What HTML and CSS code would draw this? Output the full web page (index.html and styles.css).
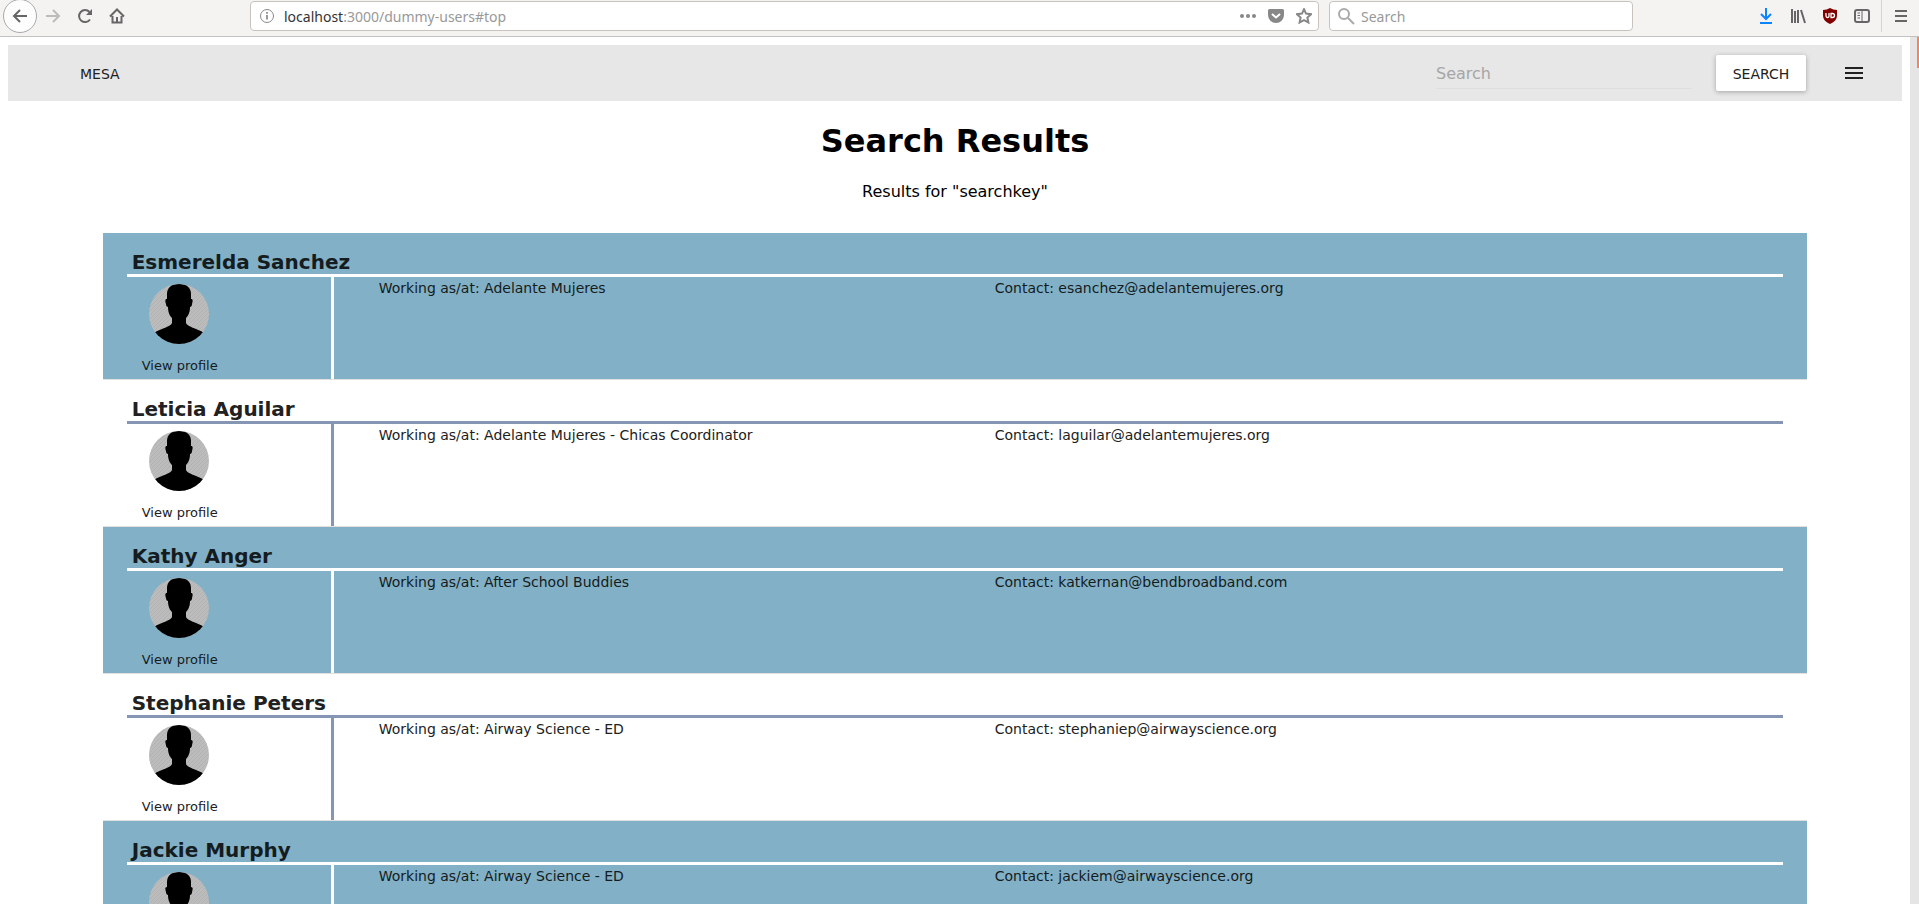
FILE: index.html
```
<!DOCTYPE html>
<html lang="en">
<head>
<meta charset="utf-8">
<title>MESA - Search Results</title>
<link rel="stylesheet" href="styles.css">
</head>
<body>
<svg class="defs" aria-hidden="true">
  <defs>
    <pattern id="stripes" width="4" height="4" patternUnits="userSpaceOnUse">
      <rect width="4" height="4" fill="#bcbcbc"/>
      <path d="M-1 1l2-2M0 4l4-4M3 5l2-2" stroke="#b2b2b2" stroke-width="1"/>
    </pattern>
    <clipPath id="round"><circle cx="30" cy="30" r="30"/></clipPath>
    <symbol id="avatar" viewBox="0 0 60 60">
      <g clip-path="url(#round)">
        <rect width="60" height="60" fill="url(#stripes)"/>
        <path d="M30 0C22 0 18 4 18 10V15C16 15 16 17 17 20C17 22 18 23 19 23C19 29 21 32 23 34V39C22 43 12 44 5 49V60H55V49C48 44 38 43 37 39V34C39 32 41 29 41 23C42 23 43 22 43 20C44 17 44 15 42 15V10C42 4 38 0 30 0Z" fill="#000"/>
      </g>
    </symbol>
  </defs>
</svg>
<header class="toolbar">
  <nav class="tools">
    <button class="tool back" aria-label="Back"><svg width="16" height="16" viewBox="0 0 16 16"><path d="M15 8H2M8 2L2 8l6 6"/></svg></button>
    <button class="tool forward" aria-label="Forward"><svg width="16" height="16" viewBox="0 0 16 16"><path d="M1 8h13M8 2l6 6-6 6"/></svg></button>
    <button class="tool" aria-label="Reload"><svg width="16" height="16" viewBox="0 0 16 16"><path d="M13 11.500A6 6 0 1 1 12.500 4"/><path d="M15 1v6H9z" fill="#666" stroke="none"/></svg></button>
    <button class="tool" aria-label="Home"><svg width="16" height="16" viewBox="0 0 16 16"><path d="M1 8.500L8 1.500l7 7M3.500 8v6.500h9V8"/><path d="M7 9h2v6H7z" fill="#666" stroke="none"/></svg></button>
  </nav>
  <div class="address">
    <svg width="16" height="16" viewBox="0 0 16 16"><circle cx="8" cy="8" r="6.500" fill="none" stroke="#888"/><path d="M8 7v4.500M8 4v1.700" stroke="#777" stroke-width="1.500"/></svg>
    <div class="url"><b>localhost</b>:3000/dummy-users#top</div>
    <button class="tool small" aria-label="Page actions"><svg width="16" height="16" viewBox="0 0 16 16"><g fill="#888" stroke="none"><circle cx="2" cy="8" r="2"/><circle cx="8" cy="8" r="2"/><circle cx="14" cy="8" r="2"/></g></svg></button>
    <button class="tool small" aria-label="Save to Pocket"><svg width="16" height="16" viewBox="0 0 16 16"><path d="M1.500 1h13A1.500 1.500 0 0 1 16 2.500V7A8 8 0 0 1 0 7V2.500A1.500 1.500 0 0 1 1.500 1z" fill="#888" stroke="none"/><path d="M4 6l4 3.500L12 6" stroke="#fff"/></svg></button>
    <button class="tool small" aria-label="Bookmark"><svg width="16" height="16" viewBox="0 0 16 16"><path d="M8 1.200l2 4.400 5 .6-3.600 3.300 1 5L8 12.200l-4.400 2.300 1-5L1 6.200l5-.6z" stroke="#888" stroke-width="2"/></svg></button>
  </div>
  <label class="websearch">
    <svg width="18" height="18" viewBox="0 0 18 18"><circle cx="7" cy="7" r="5" fill="none" stroke="#aaa" stroke-width="2"/><path d="M11 11l6 6" stroke="#aaa" stroke-width="2"/></svg>
    <input type="text" placeholder="Search" aria-label="Search the web">
  </label>
  <div class="extras">
    <button class="tool" aria-label="Downloads"><svg width="16" height="16" viewBox="0 0 16 16"><path d="M8 0v11M3 6l5 5 5-5M2 15h12" stroke="#0a84ff"/></svg></button>
    <button class="tool" aria-label="Library"><svg width="16" height="16" viewBox="0 0 16 16"><path d="M2 1v14M5 3v12M8 2v13M11 2l4 13"/></svg></button>
    <button class="tool" aria-label="Content blocker"><svg width="16" height="16" viewBox="0 0 16 16"><path d="M8 0q3 2 7 2v5c0 5-3 7-7 9-4-2-7-4-7-9V2q4 0 7-2z" fill="#800000" stroke="none"/><path d="M4 5v3q0 1.500 1.500 1.500T7 8V5M9 5.500h1.500a1.800 1.800 0 0 1 0 4H9z" stroke="#fff" stroke-width="1.300"/></svg></button>
    <button class="tool" aria-label="Sidebars"><svg width="16" height="16" viewBox="0 0 16 16"><rect x="1" y="2" width="14" height="12" rx="2"/><path d="M8 2v12M3.500 5H6M3.500 7.500H6M3.500 10H6" stroke-width="1"/></svg></button>
    <button class="tool menu" aria-label="Menu"><svg width="16" height="16" viewBox="0 0 16 16"><path d="M2 3h12M2 8h12M2 13h12"/></svg></button>
  </div>
</header>
<div class="viewport">
  <div class="page">
    <nav class="appbar">
      <a class="brand" href="#top">MESA</a>
      <form class="search">
        <input type="search" placeholder="Search" aria-label="Search">
        <button type="button">SEARCH</button>
      </form>
      <button class="burger" aria-label="Open menu"><svg width="18" height="12" viewBox="0 0 18 12"><path d="M0 1h18M0 6h18M0 11h18" stroke="#212121" stroke-width="2"/></svg></button>
    </nav>
    <main>
      <h1>Search Results</h1>
      <p class="summary">Results for "searchkey"</p>
      <ul class="results">
        <li class="card">
          <h2>Esmerelda Sanchez</h2>
          <div class="body">
            <div class="profile"><svg class="photo"><use href="#avatar"/></svg><a href="#top">View profile</a></div>
            <p>Working as/at: Adelante Mujeres</p>
            <p>Contact: esanchez@adelantemujeres.org</p>
          </div>
        </li>
        <li class="card">
          <h2>Leticia Aguilar</h2>
          <div class="body">
            <div class="profile"><svg class="photo"><use href="#avatar"/></svg><a href="#top">View profile</a></div>
            <p>Working as/at: Adelante Mujeres - Chicas Coordinator</p>
            <p>Contact: laguilar@adelantemujeres.org</p>
          </div>
        </li>
        <li class="card">
          <h2>Kathy Anger</h2>
          <div class="body">
            <div class="profile"><svg class="photo"><use href="#avatar"/></svg><a href="#top">View profile</a></div>
            <p>Working as/at: After School Buddies</p>
            <p>Contact: katkernan@bendbroadband.com</p>
          </div>
        </li>
        <li class="card">
          <h2>Stephanie Peters</h2>
          <div class="body">
            <div class="profile"><svg class="photo"><use href="#avatar"/></svg><a href="#top">View profile</a></div>
            <p>Working as/at: Airway Science - ED</p>
            <p>Contact: stephaniep@airwayscience.org</p>
          </div>
        </li>
        <li class="card">
          <h2>Jackie Murphy</h2>
          <div class="body">
            <div class="profile"><svg class="photo"><use href="#avatar"/></svg></div>
            <p>Working as/at: Airway Science - ED</p>
            <p>Contact: jackiem@airwayscience.org</p>
          </div>
        </li>
      </ul>
    </main>
  </div>
  <div class="track"><div class="thumb"></div></div>
</div>
</body>
</html>
```
FILE: styles.css
```
* { box-sizing: border-box; }

body {
  margin: 0;
  height: 100vh;
  overflow: hidden;
  display: flex;
  flex-direction: column;
  font-family: "DejaVu Sans", sans-serif;
  font-size: 14px;
  color: #000;
  background: #fff;
}

button, input { font: inherit; }
a { color: inherit; text-decoration: none; }
h1, h2, p, ul { margin: 0; padding: 0; }
.defs { position: absolute; width: 0; height: 0; }

/* Browser toolbar */
.toolbar {
  flex: none;
  display: flex;
  align-items: flex-start;
  height: 37px;
  background: #f4f3f1;
  border-bottom: 1px solid #c3c1be;
}
.tools { display: flex; flex: none; width: 250px; padding-left: 3px; }
.tool {
  display: flex;
  align-items: center;
  justify-content: center;
  width: 32px;
  height: 32px;
  padding: 0;
  border: 0;
  background: none;
}
.tool svg { fill: none; stroke: #666; stroke-width: 2; }
.back {
  width: 34px;
  height: 34px;
  margin-top: -1px;
  border: 1px solid #aaa;
  border-radius: 50%;
  background: #fdfdfd;
}
.forward svg { stroke: #bbb; }
.address, .websearch {
  display: flex;
  align-items: center;
  height: 30px;
  margin-top: 1px;
  border: 1px solid #c8c3bd;
  border-radius: 4px;
  background: #fff;
}
.address { flex: 1; padding: 0 0 0 8px; }
.url {
  flex: 1;
  padding-left: 9px;
  font-family: "Noto Sans", sans-serif;
  color: #999;
}
.url b { font-weight: 400; color: #333; }
.small { width: 28px; }
.websearch { width: 304px; margin-left: 10px; padding-left: 7px; }
.websearch input {
  flex: 1;
  min-width: 0;
  padding: 0 6px;
  border: 0;
  background: none;
  font-family: "Noto Sans", sans-serif;
}
.websearch input::placeholder { color: #999; opacity: 1; }
.extras { display: flex; flex: none; width: 286px; justify-content: flex-end; }
.menu { width: 38px; margin-left: 3px; border-left: 1px solid #d6d4d1; }

/* Viewport */
.viewport { flex: 1; min-height: 0; display: flex; }
.page { flex: 1; min-width: 0; padding: 8px; overflow: hidden; }
.track {
  flex: none;
  width: 9px;
  display: flex;
  justify-content: flex-end;
  background: #e5e5e5;
}
.thumb { width: 2px; height: 31px; background: #f08763; }

.appbar {
  display: flex;
  align-items: center;
  height: 56px;
  padding: 0 39px 0 72px;
  background: #e7e7e7;
  color: #212121;
}
.brand { flex: 1; padding-top: 2px; }
.search { display: flex; align-items: center; gap: 24px; }
.search input {
  width: 256px;
  height: 32px;
  padding: 2px 0 0;
  border: 0;
  border-bottom: 1px solid #dedede;
  background: none;
  font-size: 16px;
}
.search input::placeholder { color: #a6a6a6; opacity: 1; }
.search button {
  width: 90px;
  height: 36px;
  padding: 2px 0 0;
  border: 0;
  border-radius: 2px;
  background: #fff;
  color: #212121;
  box-shadow: 0 1px 5px rgba(0, 0, 0, .3);
}
.burger { display: flex; padding: 0; margin-left: 39px; border: 0; background: none; }

h1 { margin-top: 20px; font-size: 32px; line-height: 40px; text-align: center; }
.summary { margin-top: 21px; font-size: 16px; line-height: 20px; text-align: center; }

.results { margin: 31px 5% 0; list-style: none; }
.card {
  padding: 17px 24px 0;
  border-bottom: 1px solid #e0e0e0;
  color: #212121;
}
.card:nth-child(odd) { background: #82b0c7; color: #141c20; }
.card h2 {
  padding-left: 5px;
  border-bottom: 3px solid #8496b4;
  font-size: 20px;
  line-height: 24px;
}
.card:nth-child(odd) h2, .card:nth-child(odd) .profile { border-color: #fff; }
.body { display: grid; grid-template-columns: 207px 616px 1fr; height: 102px; }
.profile {
  display: flex;
  flex-direction: column;
  align-items: flex-start;
  padding: 7px 0 0 15px;
  border-right: 3px solid #8496b4;
  font-size: 13px;
}
.photo { width: 60px; height: 60px; margin-left: 7px; }
.profile a { margin-top: 14px; line-height: 16px; }
.body p { padding: 3px 0 0 45px; line-height: 16px; }
```
